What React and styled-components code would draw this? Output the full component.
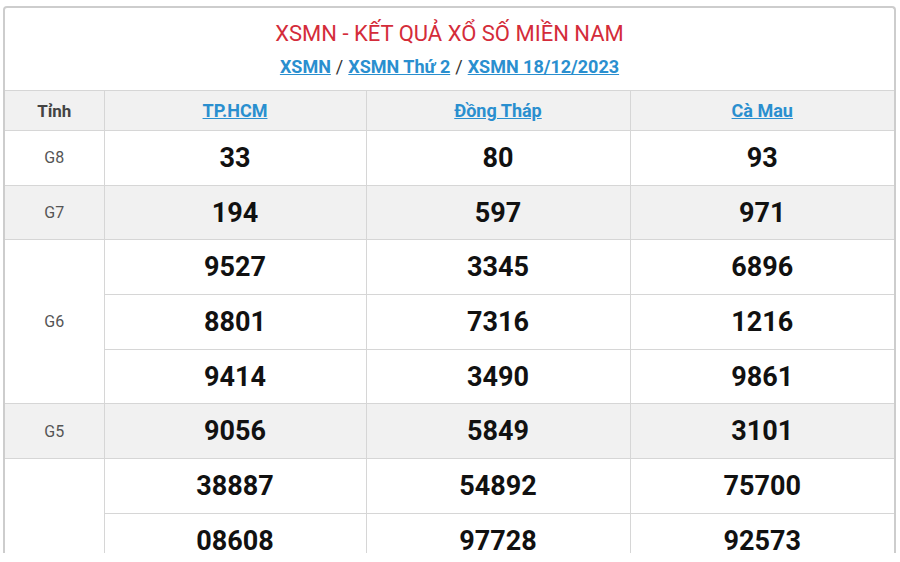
import React from "react";
import styled, { createGlobalStyle } from "styled-components";

const GlobalStyle = createGlobalStyle`
  body {
    margin: 0;
    background: #fff;
    font-family: Roboto, "Liberation Sans", sans-serif;
  }
`;

const provinces = ["TP.HCM", "Đồng Tháp", "Cà Mau"];

const prizes = [
  { label: "G8", rows: [["33", "80", "93"]] },
  { label: "G7", rows: [["194", "597", "971"]], shade: true },
  {
    label: "G6",
    rows: [
      ["9527", "3345", "6896"],
      ["8801", "7316", "1216"],
      ["9414", "3490", "9861"],
    ],
  },
  { label: "G5", rows: [["9056", "5849", "3101"]], shade: true },
  {
    label: "G4",
    rows: [
      ["38887", "54892", "75700"],
      ["08608", "97728", "92573"],
      ["11111", "22222", "33333"],
    ],
  },
];

const App = () => {
  return (
    <>
      <GlobalStyle />
      <Page>
        <Card>
          <Header>
            <Title>XSMN - KẾT QUẢ XỔ SỐ MIỀN NAM</Title>
            <Crumbs>
              <a href="#">XSMN</a>
              <span>/</span>
              <a href="#">XSMN Thứ 2</a>
              <span>/</span>
              <a href="#">XSMN 18/12/2023</a>
            </Crumbs>
          </Header>
          <Table>
            <colgroup>
              <col style={{ width: 99 }} />
              <col style={{ width: 262 }} />
              <col style={{ width: 264 }} />
              <col />
            </colgroup>
            <thead>
              <tr>
                <Th>Tỉnh</Th>
                {provinces.map((p) => (
                  <Th key={p}>
                    <a href="#">{p}</a>
                  </Th>
                ))}
              </tr>
            </thead>
            <tbody>
              {prizes.map((prize) =>
                prize.rows.map((row, i) => (
                  <Row key={prize.label + i} $shade={prize.shade}>
                    {i === 0 && (
                      <Label rowSpan={prize.rows.length}>
                        {prize.label === "G4" ? "" : prize.label}
                      </Label>
                    )}
                    {row.map((n, j) => (
                      <Num key={j}>{n}</Num>
                    ))}
                  </Row>
                ))
              )}
            </tbody>
          </Table>
        </Card>
      </Page>
    </>
  );
};

export default App;

const Page = styled.div`
  width: 900px;
  height: 562px;
  padding: 6px 0 0 3px;
  box-sizing: border-box;
`;

const Card = styled.div`
  width: 893px;
  height: 547px;
  box-sizing: border-box;
  border: 2px solid #cdcdcd;
  border-bottom: none;
  border-radius: 4px 4px 0 0;
  overflow: hidden;
  background: #fff;
`;

const Header = styled.div`
  height: 82px;
  display: flex;
  flex-direction: column;
  align-items: center;
  padding-top: 13px;
  box-sizing: border-box;
  gap: 9px;
`;

const Title = styled.h2`
  margin: 0;
  font-size: 22px;
  font-weight: 400;
  color: #d42c3a;
  line-height: 26px;
`;

const Crumbs = styled.div`
  display: flex;
  gap: 5px;
  font-size: 18px;
  font-weight: 700;
  line-height: 22px;

  a {
    color: #2a8fcf;
    text-decoration: underline;
  }

  span {
    color: #333;
    font-weight: 400;
  }
`;

const Table = styled.table`
  width: 100%;
  border-collapse: collapse;
  table-layout: fixed;
`;

const Th = styled.th`
  height: 39px;
  background: #f1f1f1;
  border: 1px solid #d6d6d6;
  border-left: none;
  font-size: 17px;
  font-weight: 700;
  color: #444;
  text-align: center;
  padding: 0;

  &:last-child {
    border-right: none;
  }

  a {
    color: #2a8fcf;
    text-decoration: underline;
    font-size: 18px;
  }
`;

const Row = styled.tr`
  background: ${(p) => (p.$shade ? "#f1f1f1" : "#fff")};
`;

const Label = styled.td`
  height: 53.7px;
  border-right: 1px solid #d6d6d6;
  border-bottom: 1px solid #d6d6d6;
  text-align: center;
  font-size: 16px;
  color: #555;
  padding: 0;
`;

const Num = styled.td`
  height: 53.7px;
  border-right: 1px solid #d6d6d6;
  border-bottom: 1px solid #d6d6d6;
  text-align: center;
  font-size: 27px;
  font-weight: 700;
  color: #111;
  padding: 0;

  &:last-child {
    border-right: none;
  }
`;
